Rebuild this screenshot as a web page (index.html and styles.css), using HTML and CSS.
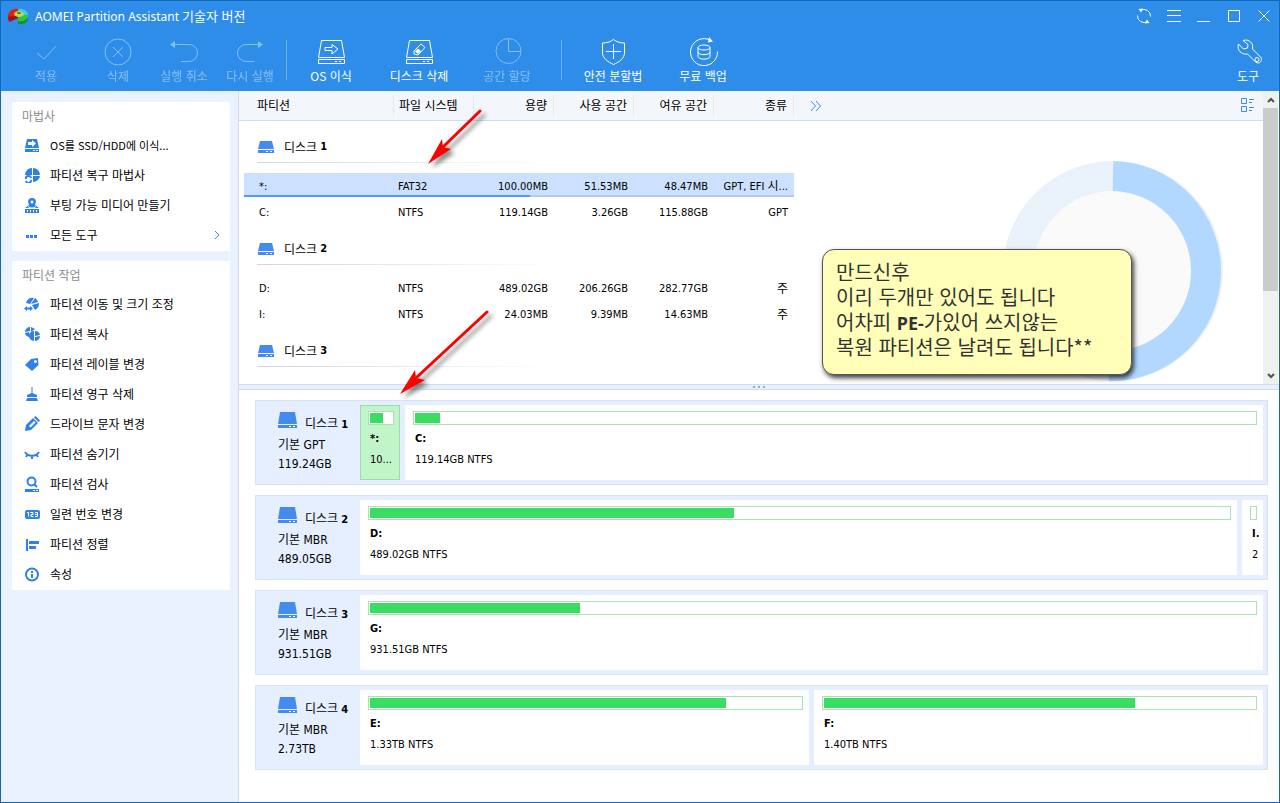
FILE: index.html
```html
<!DOCTYPE html>
<html lang="ko">
<head>
<meta charset="utf-8">
<meta name="viewport" content="width=device-width, initial-scale=1">
<title>AOMEI Partition Assistant</title>
<link rel="stylesheet" href="styles.css">
</head>
<body>
<svg class="defs" aria-hidden="true">
  <symbol id="drive-s" viewBox="0 0 16 12"><path d="M2 0h12l2 8H0zM0 9h16v3H0z" fill="#448bf0"/><path d="M8 10h2v1H8zM12 10h2v1h-2z" fill="#fff"/></symbol>
  <symbol id="drive-l" viewBox="0 0 19 16"><path d="M2 0h15l2 12H0zM0 13h19v3H0z" fill="#448bf0"/><path d="M11 14h2v1h-2zM15 14h2v1h-2z" fill="#fff"/></symbol>
</svg>
<div class="window">
  <header class="top">
    <div class="titlebar">
      <svg class="logo" width="21" height="17" viewBox="0 0 21 17">
        <path d="M10 1C4 0 0 4 0 9l1 4 9-3z" fill="#e21c12"/><path d="M0 9l10-2v3l-9 4z" fill="#a90f0c"/>
        <path d="M10 1c5-1 10 2 10 6l-9 1z" fill="#43c6ea"/><path d="M20 7v5c-2 4-6 5-10 4l0-8z" fill="#2fc14e"/><path d="M20 12c-2 4-6 5-10 4v-3c4 1 8 0 10-4z" fill="#168f36"/>
        <ellipse cx="11" cy="6" rx="5" ry="3" fill="#b6dc4e"/><ellipse cx="11" cy="5" rx="2" ry="1" fill="#3c7d2c"/>
      </svg>
      <h1 class="title">AOMEI Partition Assistant <span class="edition">기술자 버전</span></h1>
      <div class="win-buttons">
        <button class="win-btn" aria-label="새로 고침"><svg width="16" height="16" viewBox="0 0 16 16"><path d="M4.500 2.500A6.500 6.500 0 0 1 14.500 8.500M11.500 13.500A6.500 6.500 0 0 1 1.500 7.500" class="ln"/><path d="M2.500 1l4.500-.5-2 4zM13.500 15l-4.500.5 2-4z" fill="#fff"/></svg></button>
        <button class="win-btn" aria-label="메뉴"><svg width="14" height="12" viewBox="0 0 14 12"><path d="M0 .5h14M0 5.500h14M0 11.500h14" class="ln"/></svg></button>
        <button class="win-btn" aria-label="최소화"><svg width="14" height="12" viewBox="0 0 14 12"><path d="M0 11.500h13" class="ln"/></svg></button>
        <button class="win-btn" aria-label="최대화"><svg width="12" height="12" viewBox="0 0 12 12"><path d="M.5.5h11v11H.5z" class="ln"/></svg></button>
        <button class="win-btn" aria-label="닫기"><svg width="12" height="12" viewBox="0 0 12 12"><path d="M.5.5l11 11M11.500.5l-11 11" class="ln"/></svg></button>
      </div>
    </div>
    <nav class="toolbar">
      <div class="group edit">
        <button class="tool" disabled><svg width="30" height="30" viewBox="0 0 30 30"><path d="M6 16l7 6L25 9" class="ln"/></svg>적용</button>
        <button class="tool" disabled><svg width="30" height="30" viewBox="0 0 30 30"><circle cx="15" cy="15" r="13" class="ln"/><path d="M10 10l10 10M20 10L10 20" class="ln"/></svg>삭제</button>
        <button class="tool" disabled><svg width="30" height="30" viewBox="0 0 30 30"><path d="M4 7.500h16a8 8 0 0 1 0 17h-8" class="ln"/><path d="M1 7.500l5-3.500v7z" fill="#fff"/></svg>실행 취소</button>
        <button class="tool" disabled><svg width="30" height="30" viewBox="0 0 30 30"><path d="M26 7.500H11a8 8 0 0 0 0 17h8" class="ln"/><path d="M28 7.500L23 4v7z" fill="#fff"/></svg>다시 실행</button>
      </div>
      <div class="group">
        <button class="tool"><svg width="30" height="30" viewBox="0 0 30 30"><path d="M5.500 3.500h20l3 17h-26zM2.500 22.500h26v4h-26z" class="ln"/><path d="M9 10.500h7v-3l6 4.500-6 5v-3.500H9z" class="ln"/><path d="M19 24.500h2M23 24.500h2" class="ln"/></svg>OS 이식</button>
        <button class="tool"><svg width="30" height="30" viewBox="0 0 30 30"><path d="M5.500 3.500h20l3 17h-26zM2.500 22.500h26v4h-26z" class="ln"/><path d="M10 14l7-7 4 3.500-7 7.500-4-1z" class="ln"/><path d="M11 14.500l3-3 3 2.500-3 3z" fill="#fff"/><path d="M19 24.500h2M23 24.500h2" class="ln"/></svg>디스크 삭제</button>
        <button class="tool" disabled><svg width="30" height="30" viewBox="0 0 30 30"><circle cx="16.500" cy="14" r="12.500" class="ln"/><path d="M16.500 2v12.500H29" class="ln"/></svg>공간 할당</button>
      </div>
      <div class="group extras">
        <button class="tool"><svg width="30" height="30" viewBox="0 0 30 30"><path d="M15.500 2.500c3 2.500 7 3.500 11 3.500v10c0 5-5 9-11 11.500C10 25 4.500 21 4.500 16V6c4 0 8-1 11-3.500zM15.500 7v15M8 14.500h15" class="ln"/></svg>안전 분할법</button>
        <button class="tool"><svg width="30" height="30" viewBox="0 0 30 30"><path d="M29.500 14.500A13.500 13.500 0 1 1 22 3" class="ln"/><path d="M21 0l4 4.500-5 1z" fill="#fff"/><ellipse cx="16" cy="10.500" rx="6" ry="2.500" class="ln"/><path d="M10 10.500v9c0 3.500 12 3.500 12 0v-9M10 15c0 3.500 12 3.500 12 0" class="ln"/></svg>무료 백업</button>
      </div>
      <button class="tool utility"><svg width="30" height="30" viewBox="0 0 30 30"><path d="M10 3.500c6-2 11 3 9.500 8.500l8 8c3 3-1 8-5 5l-8-8c-6 1-11-4-9-10l5 5 4-1 .5-3.500z" class="ln"/><circle cx="24" cy="22.500" r="2" class="ln"/></svg>도구</button>
    </nav>
  </header>

  <div class="body">
    <aside class="sidebar">
      <section class="panel">
        <h2 class="panel-title">마법사</h2>
        <button class="action"><svg viewBox="0 0 16 16"><path d="M3 2h10l2 9H1zM1 12h14v3H1z"/><path d="M4 5h4V3l4 3.500L8 10V8H4z" class="w"/><path d="M9 13h2v1H9zM12 13h2v1h-2z" class="w"/></svg><span class="mixed">OS를 SSD/HDD에 이식...</span></button>
        <button class="action"><svg viewBox="0 0 16 16"><path d="M8 1v7H1a7 7 0 0 1 7-7zM9 1a7 7 0 0 1 7 7H9zM9 9h7a7 7 0 0 1-7 6z"/><path d="M2 12a2.500 2.500 0 0 1 5-1M7 13a2.500 2.500 0 0 1-5 1" class="s"/></svg>파티션 복구 마법사</button>
        <button class="action"><svg viewBox="0 0 16 16"><path d="M8 1a4 4 0 0 1 4 4l-1 3 4 3H1l4-3-1-3a4 4 0 0 1 4-4zM1 12h14v4H1z"/><circle cx="8" cy="5" r="1.500" class="w"/><path d="M4 9c3 2 5 2 8 0v1c-3 2-5 2-8 0zM3 13h1v2H3zM6 13h1v2H6zM9 13h1v2H9zM12 13h1v2h-1z" class="w"/></svg>부팅 가능 미디어 만들기</button>
        <button class="action"><svg viewBox="0 0 16 16"><path d="M2 8h3v3H2zM6 8h3v3H6zM10 8h3v3h-3z"/></svg>모든 도구<svg class="chevron" viewBox="0 0 6 10"><path d="M1 1l4 4-4 4" class="s1"/></svg></button>
      </section>
      <section class="panel">
        <h2 class="panel-title">파티션 작업</h2>
        <button class="action"><svg viewBox="0 0 16 16"><path d="M2 7a6.500 6.500 0 0 1 8-5L6 8zM11 2a7 7 0 0 1 3 4l-7 2zM15 7c0 4-2 6-4 7L8 9z"/><path d="M0 12.500L3 10v1.500h3V10l3 2.500L6 15v-1.500H3V15z"/></svg>파티션 이동 및 크기 조정</button>
        <button class="action"><svg viewBox="0 0 16 16"><path d="M1 6a5 5 0 0 1 5-5v4zM7 1l4 2-4 3zM1 7l4-1 1 5C3 11 1 9 1 7z"/><path d="M10 5v10a5 5 0 0 1 0-10zM11 5a5 5 0 0 1 5 4l-5 1zM16 10c0 3-3 5-5 5v-4z"/></svg>파티션 복사</button>
        <button class="action"><svg viewBox="0 0 16 16"><path d="M7 3l7-1 .5 7L8 15 1 9z"/><circle cx="11.500" cy="5.500" r="1.500" class="w"/></svg>파티션 레이블 변경</button>
        <button class="action"><svg viewBox="0 0 16 16"><path d="M7.500 1h1v6l4.500 2v2H3V9l4.500-2zM3 12h10l1 3H2z"/></svg>파티션 영구 삭제</button>
        <button class="action"><svg viewBox="0 0 16 16"><path d="M1 15l1-6 7-7 5 5-7 7z"/><path d="M5 10l5-5 1.500 1.500-5 5z" class="w"/><path d="M10 1.500L11.500 0 16 4.500 14.500 6z"/></svg>드라이브 문자 변경</button>
        <button class="action"><svg viewBox="0 0 16 16"><path d="M1 6c3 5 11 5 14 0M4 8l-2 3M8 10v3M12 8l2 3" class="s"/></svg>파티션 숨기기</button>
        <button class="action"><svg viewBox="0 0 16 16"><circle cx="7.500" cy="5.500" r="4" class="s"/><path d="M10 8l3 3" class="s"/><path d="M1 13h14v3H1z"/><path d="M9 14h2v1H9zM12 14h2v1h-2z" class="w"/></svg>파티션 검사</button>
        <button class="action"><svg viewBox="0 0 16 16"><rect x="1" y="4" width="15" height="9" rx="2"/><path d="M3 6.500h1.500v4M6 6.500h3v2H7v2h2.500M11 6.500h2.500v4H11M11 8.500h2" class="sw"/></svg>일련 번호 변경</button>
        <button class="action"><svg viewBox="0 0 16 16"><path d="M2 3h2v12H2zM5 5h10v3H5zM5 10h7v3H5z"/></svg>파티션 정렬</button>
        <button class="action"><svg viewBox="0 0 16 16"><circle cx="8" cy="8.500" r="6" class="s"/><path d="M7 5h2v2H7zM7 8h2v4H7z"/></svg>속성</button>
      </section>
    </aside>

    <main class="main">
      <section class="overview">
        <table class="partitions">
          <colgroup><col class="c-name"><col><col><col><col><col></colgroup>
          <thead><tr><th scope="col">파티션</th><th scope="col">파일 시스템</th><th scope="col">용량</th><th scope="col">사용 공간</th><th scope="col">여유 공간</th><th scope="col">종류</th></tr></thead>
          <tbody>
            <tr class="disk-row"><th colspan="6" scope="rowgroup"><div class="disk-head"><svg><use href="#drive-s"/></svg>디스크 <b>1</b></div></th></tr>
            <tr class="selected"><td>*:<span class="usage"><span class="usage-fill" style="width:52%"></span></span></td><td>FAT32</td><td>100.00MB</td><td>51.53MB</td><td>48.47MB</td><td>GPT, EFI <span class="ko">시</span>...</td></tr>
            <tr><td>C:</td><td>NTFS</td><td>119.14GB</td><td>3.26GB</td><td>115.88GB</td><td>GPT</td></tr>
          </tbody>
          <tbody>
            <tr class="disk-row"><th colspan="6" scope="rowgroup"><div class="disk-head"><svg><use href="#drive-s"/></svg>디스크 <b>2</b></div></th></tr>
            <tr><td>D:</td><td>NTFS</td><td>489.02GB</td><td>206.26GB</td><td>282.77GB</td><td class="ko">주</td></tr>
            <tr><td>I:</td><td>NTFS</td><td>24.03MB</td><td>9.39MB</td><td>14.63MB</td><td class="ko">주</td></tr>
          </tbody>
          <tbody>
            <tr class="disk-row"><th colspan="6" scope="rowgroup"><div class="disk-head"><svg><use href="#drive-s"/></svg>디스크 <b>3</b></div></th></tr>
          </tbody>
        </table>
        <div class="chart-side">
          <div class="chart-head">
            <button class="icon-btn" aria-label="더 보기"><svg width="12" height="10" viewBox="0 0 12 10"><path d="M1 0l4.500 5L1 10M6 0l4.500 5L6 10" class="s1"/></svg></button>
            <button class="icon-btn" aria-label="보기 전환"><svg width="14" height="15" viewBox="0 0 14 15"><path d="M.5.5h5v5h-5zM.5 8.500h5v5h-5zM8 1.500h5M8 4.500h3M8 9.500h5M8 12.500h3" class="s1"/></svg></button>
          </div>
          <svg class="donut" viewBox="0 0 220 220"><circle cx="110" cy="110" r="80" fill="#fafafa"/><circle cx="110" cy="110" r="95" class="ring"/><path d="M110 15a95 95 0 1 1-4 190" class="ring used"/></svg>
        </div>
        <div class="scrollbar">
          <button class="sb-btn" aria-label="위로"><svg width="8" height="6" viewBox="0 0 8 6"><path d="M1 5l3-3 3 3"/></svg></button>
          <div class="thumb"></div>
          <button class="sb-btn down" aria-label="아래로"><svg width="8" height="6" viewBox="0 0 8 6"><path d="M1 1l3 3 3-3"/></svg></button>
        </div>
      </section>

      <div class="splitter"><i></i><i></i><i></i></div>

      <section class="disks">
        <article class="disk">
          <div class="label"><h3><svg><use href="#drive-l"/></svg>디스크 <b>1</b></h3><p>기본 GPT</p><p>119.24GB</p></div>
          <div class="part small active"><div class="bar"><div class="fill" style="width:59%"></div></div><b>*:</b><p>10...</p></div>
          <div class="part"><div class="bar"><div class="fill" style="width:3%"></div></div><b>C:</b><p>119.14GB NTFS</p></div>
        </article>
        <article class="disk">
          <div class="label"><h3><svg><use href="#drive-l"/></svg>디스크 <b>2</b></h3><p>기본 MBR</p><p>489.05GB</p></div>
          <div class="part"><div class="bar"><div class="fill" style="width:42.4%"></div></div><b>D:</b><p>489.02GB NTFS</p></div>
          <div class="part tiny"><div class="bar"></div><b>I.</b><p>2</p></div>
        </article>
        <article class="disk">
          <div class="label"><h3><svg><use href="#drive-l"/></svg>디스크 <b>3</b></h3><p>기본 MBR</p><p>931.51GB</p></div>
          <div class="part"><div class="bar"><div class="fill" style="width:23.7%"></div></div><b>G:</b><p>931.51GB NTFS</p></div>
        </article>
        <article class="disk">
          <div class="label"><h3><svg><use href="#drive-l"/></svg>디스크 <b>4</b></h3><p>기본 MBR</p><p>2.73TB</p></div>
          <div class="part"><div class="bar"><div class="fill" style="width:82.6%"></div></div><b>E:</b><p>1.33TB NTFS</p></div>
          <div class="part"><div class="bar"><div class="fill" style="width:72.2%"></div></div><b>F:</b><p>1.40TB NTFS</p></div>
        </article>
      </section>
    </main>
  </div>

  <svg class="arrows" width="520" height="410" viewBox="0 0 520 410" aria-hidden="true">
    <path d="M480 111l-37 36" class="shaft"/><path d="M428 164l14-25 1 8 8 2z" fill="#f00"/>
    <path d="M487 312l-70 65" class="shaft"/><path d="M400 394l15-24 1 8 9 2z" fill="#f00"/>
  </svg>
  <div class="note"><p>만드신후</p><p>이리 두개만 있어도 됩니다</p><p>어차피 <b>PE-</b>가있어 쓰지않는</p><p>복원 파티션은 날려도 됩니다**</p></div>
</div>
</body>
</html>
```

FILE: styles.css
```css
* { box-sizing: border-box; }
body, h1, h2, h3, p { margin: 0; }
body {
  font: 12px/16px "Noto Sans CJK KR", "Noto Sans", sans-serif;
  color: #000;
}
h1, h2, h3 { font-size: inherit; font-weight: 400; }
button {
  border: 0;
  padding: 0;
  background: none;
  font: inherit;
  color: inherit;
}
svg { flex: none; }
.defs { position: absolute; width: 0; height: 0; }
.ln { fill: none; stroke: #fff; stroke-width: 1; }

.window {
  position: relative;
  display: flex;
  flex-direction: column;
  min-height: 100vh;
  border: 1px solid #0f68b8;
  background: #fff;
}

/* Title bar and toolbar */
.top { height: 90px; background: #2d8de8; color: #fff; }
.titlebar { display: flex; align-items: center; height: 30px; padding-left: 7px; }
.title { margin-left: 6px; font-family: "Noto Sans", sans-serif; }
.edition { font-family: "Noto Sans CJK KR", sans-serif; font-size: 13px; }
.win-buttons { display: flex; margin-left: auto; }
.win-btn { display: grid; place-items: center; width: 30px; height: 30px; }
.toolbar { display: flex; align-items: flex-start; padding: 6px 0 0 12px; }
.group { display: flex; }
.group + .group {
  height: 40px;
  margin: 3px 0 0 3px;
  border-left: 1px solid #6fb1ee;
}
.group + .group .tool { margin-top: -3px; }
.group + .extras { margin-left: 10px; padding-left: 6px; }
.tool {
  display: flex;
  flex-direction: column;
  align-items: center;
  gap: 1px;
  width: 88px;
  height: 48px;
  white-space: nowrap;
}
.edit .tool { width: 66px; }
.extras .tool { width: 90px; }
.edit .tool:first-child { margin-right: 6px; }
.tool:disabled { color: #fff; opacity: .42; }
.utility { width: 62px; margin-left: auto; }

/* Sidebar */
.body { display: flex; flex: 1; }
.sidebar {
  display: flex;
  flex-direction: column;
  gap: 10px;
  flex: none;
  width: 238px;
  padding: 11px 8px 0 11px;
  border-right: 1px solid #d3dae6;
  background: #eaf2ff;
}
.panel { padding-bottom: 1px; background: #fff; }
.panel-title { padding-left: 10px; line-height: 28px; color: #8c8c8c; }
.action {
  display: flex;
  align-items: center;
  gap: 10px;
  width: 100%;
  height: 30px;
  padding: 0 10px 0 12px;
  text-align: left;
}
.action svg { width: 16px; height: 16px; fill: #2f80e8; }
.action .chevron { width: 6px; height: 10px; margin-left: auto; }
.action .w { fill: #fff; }
.action .s { fill: none; stroke: #2f80e8; stroke-width: 2; }
.action .sw { fill: none; stroke: #fff; }
.mixed { font-size: 11px; }
.s1 { fill: none; stroke: #3b8bea; }

/* Partition list */
.main { display: flex; flex-direction: column; flex: 1; min-width: 0; }
.overview { display: flex; height: 293px; overflow: hidden; }
.partitions {
  flex: none;
  align-self: flex-start;
  width: 555px;
  table-layout: fixed;
  border-spacing: 0;
  font: 11px/16px "DejaVu Sans Condensed", "Noto Sans CJK KR", sans-serif;
}
.c-name { width: 155px; }
.partitions thead th {
  height: 30px;
  padding: 0 7px 2px 5px;
  border-bottom: 1px solid #cddff2;
  background: linear-gradient(#e3e7ee, #e3e7ee) right 4px / 1px 21px no-repeat #f3f6fb;
  font: 12px/16px "Noto Sans CJK KR", sans-serif;
  text-align: right;
}
.partitions thead th:first-child { padding-left: 18px; }
.partitions thead th:nth-child(-n+2) { text-align: left; }
.partitions tbody:nth-of-type(1)::before { content: ""; display: table-row; height: 2px; }
.partitions td {
  height: 26px;
  padding: 3px 6px 0 4px;
  border-bottom: 2px solid #fff;
  text-align: right;
  white-space: nowrap;
}
.partitions td:first-child { padding-left: 15px; border-left: 5px solid #fff; }
.partitions td:nth-child(-n+2) { text-align: left; }
.partitions .ko { font-size: 12px; line-height: 14px; }
.selected { position: relative; background: #cce0ff; }
.usage { position: absolute; left: 5px; right: 0; bottom: 2px; height: 2px; background: #b5caec; }
.usage-fill { display: block; height: 2px; background: #5499f7; }
.disk-row th { height: 50px; padding: 0 0 0 18px; vertical-align: top; font-weight: 400; }
.disk-head {
  display: flex;
  align-items: center;
  gap: 4px;
  height: 40px;
  padding: 8px 0 0 1px;
  border-bottom: 1px solid;
  border-image: linear-gradient(90deg, #cdd6e4, #fff 300px) 1;
  font: 12px/16px "Noto Sans CJK KR", sans-serif;
}
.disk-head svg { width: 16px; height: 12px; margin-right: 6px; }
.disk-head b, .label b { font: bold 11px/16px "DejaVu Sans Condensed", sans-serif; }
.disk-head b { margin-left: -1px; }

.chart-side { flex: 1; min-width: 0; }
.chart-head {
  display: flex;
  align-items: center;
  justify-content: space-between;
  height: 30px;
  padding: 0 8px 0 16px;
  border-bottom: 1px solid #cddff2;
  background: #f3f6fb;
}
.icon-btn { display: grid; }
.donut { display: block; width: 220px; height: 220px; margin: 40px 40px 0 auto; }
.ring { fill: none; stroke: #e9f1fb; stroke-width: 30; }
.used { stroke: #b3d8ff; }

.scrollbar { display: flex; flex-direction: column; width: 15px; margin-right: 1px; background: #f0f0f0; }
.sb-btn { display: grid; place-items: center; height: 17px; }
.sb-btn path { fill: none; stroke: #505050; stroke-width: 2; }
.thumb { height: 183px; background: #cbcbcb; }
.down { margin-top: auto; }

.splitter {
  display: flex;
  align-items: center;
  justify-content: center;
  gap: 3px;
  height: 6px;
  border: solid #d3deeb;
  border-width: 1px 0;
  background: #e8eff8;
}
.splitter i { width: 2px; height: 2px; background: #7faeea; }

/* Disk map */
.disks { display: flex; flex-direction: column; gap: 10px; padding: 10px 11px 10px 16px; }
.disk {
  display: flex;
  gap: 5px;
  height: 85px;
  padding: 4px;
  border: 1px solid #d5e3f5;
  background: #e6efff;
  font: 11px/16px "DejaVu Sans Condensed", "Noto Sans CJK KR", sans-serif;
}
.label { flex: none; width: 95px; padding: 7px 0 0 18px; font-size: 12px; line-height: 19px; white-space: nowrap; }
.label h3 { display: flex; align-items: baseline; gap: 3px; line-height: 24px; }
.label h3 svg { width: 19px; height: 16px; margin-right: 5px; }
.part { flex: 1; min-width: 0; padding: 6px 6px 0 8px; background: #fff; }
.small { flex: none; width: 40px; }
.tiny { flex: none; width: 21px; }
.active { padding: 5px 5px 0 7px; border: 1px solid #9ddba8; background: #c2f4ca; }
.bar { height: 14px; padding: 1px; border: 1px solid #a9e2b4; background: #fff; }
.fill { height: 10px; background: #38dd62; }
.part b { display: block; margin: 6px 0 5px 2px; }
.part p { margin-left: 2px; white-space: nowrap; }

/* Annotations */
.arrows { position: absolute; left: -1px; top: -1px; pointer-events: none; filter: drop-shadow(4px 4px 2px rgba(0, 0, 0, .45)); }
.shaft { stroke: #f00; stroke-width: 3; stroke-linecap: round; }
.note {
  position: absolute;
  left: 821px;
  top: 248px;
  width: 310px;
  padding: 9px 13px 15px;
  border: 1px solid #555;
  border-radius: 12px;
  background: #ffffb9;
  box-shadow: 2px 3px 5px rgba(0, 0, 0, .75);
  font: 20px/25px "Noto Sans CJK KR", sans-serif;
  color: #333;
  white-space: nowrap;
}
.note p { height: 25px; }
.note b { font-family: "Noto Sans", sans-serif; font-size: 18px; }
```
